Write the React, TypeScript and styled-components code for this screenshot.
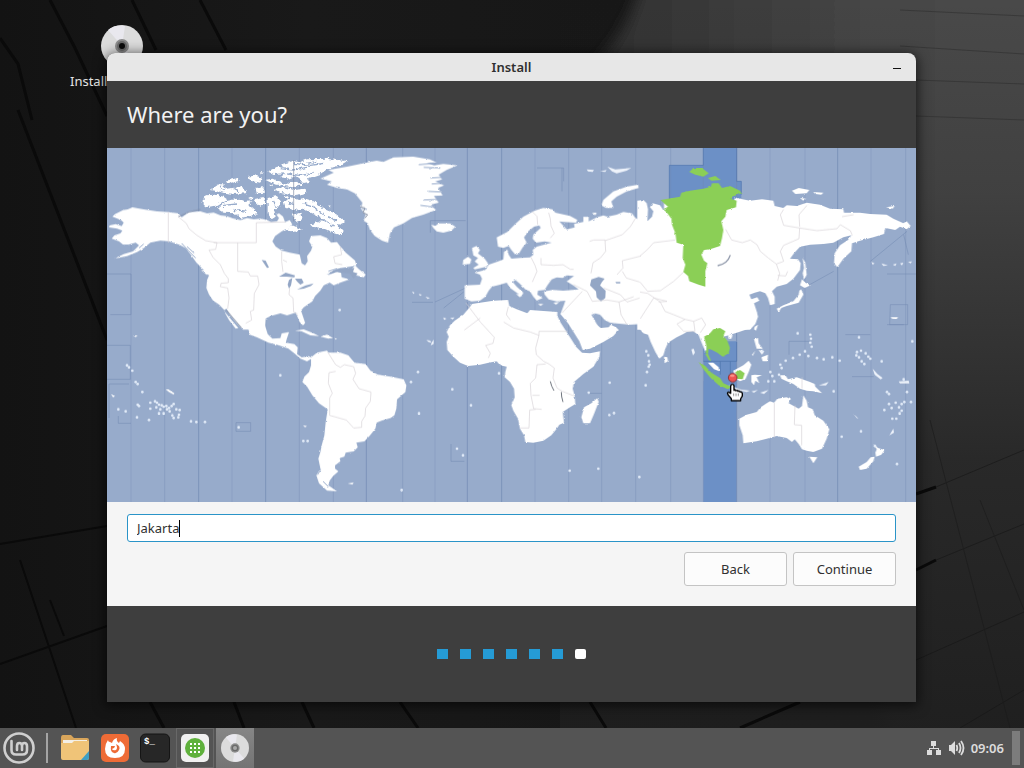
import { useState } from "react"
import styled, { createGlobalStyle } from "styled-components"

const GlobalStyle = createGlobalStyle`
  * {
    box-sizing: border-box;
  }
  body {
    margin: 0;
    font-family: "Noto Sans", "Open Sans", sans-serif;
    font-size: 13px;
    color: #303030;
  }
`

const Desktop = styled.div`
  position: relative;
  display: flex;
  flex-direction: column;
  min-height: 100vh;
  overflow: hidden;
  background-color: #191919;
  > .wallpaper {
    position: absolute;
    inset: 0;
    width: 100%;
    height: 100%;
  }
`

const Workspace = styled.main`
  position: relative;
  flex: 1;
  padding: 53px 108px 26px 107px;
`

const DesktopIcon = styled.div`
  position: absolute;
  top: 25px;
  left: 70px;
  display: flex;
  flex-direction: column;
  align-items: center;
  gap: 5px;
  width: 104px;
  color: #e4e4e4;
  line-height: 18px;
  white-space: nowrap;
  > .name {
    align-self: flex-start;
  }
`

const Window = styled.section`
  position: relative;
  display: flex;
  flex-direction: column;
  border-radius: 8px 8px 0 0;
  background-color: #3e3e3e;
  box-shadow: 0 2px 12px 2px rgba(0, 0, 0, 0.6);
  overflow: hidden;
`

const TitleBar = styled.header`
  display: grid;
  grid-template-columns: 38px 1fr 38px;
  align-items: center;
  height: 28px;
  background-color: #e7e7e7;
  > h1 {
    grid-column: 2;
    margin: 0;
    font-size: 13px;
    font-weight: 600;
    text-align: center;
  }
  > button {
    grid-column: 3;
    display: flex;
    justify-content: center;
    padding: 8px 0;
    border: 0;
    background: none;
  }
`

const Heading = styled.h2`
  margin: 0;
  padding: 15px 20px;
  height: 67px;
  color: #f2f2f2;
  font-size: 22px;
  font-weight: 400;
  line-height: 36px;
`

const Map = styled.svg`
  display: block;
  width: 100%;
  background-color: #97abcb;
`

const Form = styled.form`
  display: flex;
  flex-direction: column;
  gap: 10px;
  padding: 12px 20px 20px;
  background-color: #f5f5f5;
`

const Field = styled.label`
  display: flex;
  align-items: center;
  height: 28px;
  padding: 0 9px;
  border: 1px solid #2a94c8;
  border-radius: 3px;
  background-color: #fff;
  cursor: text;
  > input {
    field-sizing: content;
    padding: 0;
    border: 0;
    outline: 0;
    background: none;
    color: #303030;
    font: inherit;
    caret-color: transparent;
  }
`

const Caret = styled.span`
  width: 1px;
  height: 17px;
  background-color: #000;
`

const Actions = styled.div`
  display: flex;
  justify-content: flex-end;
  gap: 6px;
`

const Button = styled.button`
  width: 103px;
  height: 34px;
  padding: 0;
  border: 1px solid #c4c4c4;
  border-radius: 3px;
  background-color: #fcfcfc;
  color: #303030;
  font: inherit;
`

const Steps = styled.div`
  display: flex;
  align-items: center;
  justify-content: center;
  gap: 12px;
  height: 96px;
`

const Step = styled.span<{ $current?: boolean }>`
  width: 11px;
  height: 10px;
  border-radius: ${(p) => (p.$current ? "2px" : "0")};
  background-color: ${(p) => (p.$current ? "#fff" : "#259bd5")};
`

const Panel = styled.footer`
  position: relative;
  display: flex;
  align-items: center;
  height: 40px;
  background-color: #545454;
  color: #dcdcdc;
`

const MenuButton = styled.button`
  width: 38px;
  height: 40px;
  padding: 0;
  border: 0;
  background: none;
  > svg {
    display: block;
    margin: 0 auto;
  }
`

const Separator = styled.span`
  width: 2px;
  height: 30px;
  margin: 0 7px 0 8px;
  background-color: #a4a4a4;
`

const Launcher = styled.button<{ $open?: boolean; $active?: boolean }>`
  display: flex;
  align-items: center;
  justify-content: center;
  width: ${(p) => (p.$open || p.$active ? "38px" : "40px")};
  height: 40px;
  margin-left: ${(p) => (p.$open ? "1px" : p.$active ? "2px" : "0")};
  padding: 0;
  border: ${(p) => (p.$open ? "1px solid #686868" : "0")};
  background: ${(p) => (p.$active ? "linear-gradient(#868686, #747474)" : "transparent")};
`

const Tray = styled.div`
  display: flex;
  align-items: center;
  gap: 6px;
  margin-left: auto;
  font-weight: 600;
  font-size: 13px;
  > .corner {
    width: 8px;
    height: 34px;
    margin: 0 4px 0 2px;
    background-color: #7c7c7c;
  }
`

/* Map data. One sheet of 270x180 pixels is drawn in thirds of a pixel. */

const zoneLines = [
  72, 173, 275, 375, 476, 577, 679, 778, 887, 984, 1081, 1184, 1284, 1385, 1484, 1586, 1691, 1789, 1889, 1989, 2094,
  2192, 2292, 2396,
]

const strongLines = [275, 476, 778, 1081, 1184, 2192, 1889]

const zoneBoxes =
  "M0 378H72V500H10 M0 592H70V694H0 M6 708V810 M6 708H66 M34 804V826H72 M387 824H431V850H387Z M1032 888V940H1072 M1076 218H970V254 M915 463H978 M984 462L1076 420 M1010 480L1070 432 M1365 60V130 M1290 60H1370 M1370 60V100 M2350 470H2402V530H2348Z M2340 378H2427 M2390 260L2404 320 M2290 340L2400 250 M2090 420L2180 370 M2046 580H2110 M2046 580V620 M2215 560H2290 M2235 686H2300 M2340 530H2390 M1440 736H1484"

const northAmerica = [
  "M8 232L26 228 44 234 50 224 42 216 16 206 24 198 48 186 62 184 76 178 110 184 150 190 184 192 214 196 224 208 246 192 280 190 300 196 320 194 340 202 358 204 380 212 400 216 420 210 440 214 462 212 480 216 492 222 510 220 516 210 508 200 516 196 528 206 534 222 548 216 556 230 540 242 524 250 504 264 496 280 506 296 524 308 548 314 578 320 584 346 594 352 602 340 600 324 612 308 616 296 606 280 612 264 640 262 660 270 672 284 690 282 700 296 706 302 716 314 730 326 744 338 748 352 730 356 700 360 680 366 662 382 690 370 702 374 704 388 728 394 700 404 680 412 668 404 650 412 640 428 624 444 616 460 590 478 582 488 594 524 588 532 578 522 566 494 540 502 520 496 490 504 476 512 474 545 408 545 390 526 370 502 358 482 352 486 336 470 318 458 306 440 298 420 300 396 306 382 290 366 268 344 250 318 236 300 216 290 186 280 160 278 130 284 110 300 90 312 60 324 22 332 50 318 78 310 96 292 86 284 64 290 48 290 36 280 14 272 22 262 40 256 46 248 30 242 6 238Z",
  "M730 368L744 352 756 364 776 380 770 388 748 382Z",
  "M282 366L296 368 310 380 298 380Z",
]

const arctic = [
  "M290 150L296 142 326 140 352 148 360 154 330 172 300 178 290 170Z",
  "M330 182L356 160 390 152 412 162 436 160 424 170 440 184 452 198 430 204 400 210 384 196 350 194Z",
  "M308 126L330 110 352 108 356 122 400 118 420 128 416 136 380 138 350 134 322 128Z",
  "M356 98L392 90 398 98 370 106Z",
  "M424 86L450 82 466 92 456 104 430 98Z",
  "M446 120L470 118 474 134 450 136Z",
  "M440 156L470 150 478 170 460 176Z",
  "M476 96L500 92 524 104 540 110 552 102 574 106 596 104 574 112 560 118 530 114 500 108Z",
  "M500 122L530 118 560 126 596 122 598 136 560 142 520 134Z",
  "M484 70L510 56 532 60 526 48 556 40 580 42 600 34 660 32 720 40 700 52 660 64 640 78 600 92 610 104 590 108 580 96 566 84 548 92 520 88 536 76 500 78Z",
  "M482 150L510 144 520 160 516 178 500 184 506 206 494 214 482 196Z",
  "M530 160L556 148 576 156 596 152 620 160 640 176 670 190 690 200 714 222 704 230 690 228 708 250 700 262 676 254 656 244 620 240 610 230 640 220 640 206 612 196 590 182 560 186 536 180Z",
  "M530 240L556 232 588 246 560 252Z",
  "M554 200L580 194 584 216 566 222Z",
  "M458 74L470 72 466 78Z M486 110L498 112 496 118Z M424 152L436 148 434 156Z M528 148L544 144 540 152Z M664 172L674 174 668 178Z",
]

const europe = [
  "M-149 92L-109 74 -125 66 -69 56 -29 48 0 42 20 38 40 42 70 28 130 26 180 34 200 44 170 44 192 52 220 48 262 52 230 66 206 80 216 94 196 100 222 112 204 120 218 142 192 144 206 164 182 170 198 186 160 200 126 210 100 226 72 238 60 256 54 284 36 278 14 264 0 246 -7 226 -19 218 -13 200 -27 182 -23 164 -45 136 -69 124 -99 120 -129 110 -115 100Z",
  "M184 230L196 234 206 226 240 226 256 236 244 248 220 254 200 250 190 240Z",
  "M284 412L330 410 336 392 330 380 314 374 346 366 356 350 380 342 400 334 402 312 412 304 416 320 424 332 450 330 480 328 490 320 488 306 500 296 522 290 545 284 524 280 498 284 488 272 490 260 512 240 508 232 492 236 474 250 462 268 470 284 458 298 446 318 436 320 424 306 416 294 400 300 384 296 380 268 412 252 436 228 460 206 494 188 520 180 548 184 556 194 600 204 622 216 618 224 580 222 568 220 590 244 614 238 612 228 640 222 640 208 656 206 656 220 680 208 700 202 712 206 740 200 760 192 786 196 796 210 818 220 818 528 780 530 740 526 720 524 704 516 690 500 676 496 664 500 690 545 608 545 592 520 572 498 576 486 582 470 586 458 560 460 536 454 524 440 522 430 548 426 580 428 626 424 610 412 590 400 612 384 590 382 578 390 560 388 545 394 532 412 524 426 504 428 502 440 518 450 500 458 490 446 480 430 466 424 450 408 436 396 428 402 440 416 460 434 454 446 440 434 420 420 410 404 390 410 366 416 356 428 346 446 330 458 304 460 284 452Z",
  "M306 300L320 294 330 306 324 316 344 332 354 346 350 356 314 364 310 360 326 350 314 340 324 330 310 322Z",
  "M280 336L294 326 304 334 300 348 278 350Z",
  "M694 172L700 156 730 130 770 116 804 110 806 120 770 130 740 146 724 160 730 180 708 180Z",
  "M438 438L454 440 450 448Z M504 468L520 468 512 474Z M550 464L568 462 558 470Z M640 206L652 208 650 222 642 220Z M666 194L680 194 676 202Z",
]

const asia = [
  "M-8 158L10 156 20 166 24 184 22 220 36 206 40 190 30 178 38 166 60 172 72 190 72 160 100 150 280 168 284 148 300 152 330 158 366 154 400 158 404 174 430 180 440 172 470 174 500 164 540 170 570 182 610 184 612 194 660 194 690 198 740 200 760 212 790 226 800 220 812 234 800 244 780 236 766 246 736 240 732 258 700 268 660 278 636 286 634 310 610 332 592 358 582 346 584 316 600 292 624 276 634 262 610 268 580 284 550 288 510 290 480 296 462 316 450 332 474 334 482 346 480 366 460 392 440 408 410 416 396 430 404 446 404 468 390 472 384 450 376 436 360 430 344 434 328 440 334 454 352 448 358 458 342 466 350 490 354 506 346 528 330 545 -8 545Z",
  "M486 394L496 404 512 412 494 420 480 412Z",
  "M484 424L490 440 476 464 440 474 424 480 416 492 410 482 430 472 460 460 476 440 478 428Z",
  "M488 330L496 344 500 380 492 396 488 376 492 360Z",
  "M456 128L476 120 508 126 500 136 466 138Z M520 132L550 134 544 140 526 138Z M480 150L498 152 490 158Z M738 178L764 174 758 182Z",
  "M752 508L774 508 770 513 756 512Z",
]

const southAmerica = [
  "M350 -34L370 -10 394 18 386 20 366 -6Z",
  "M400 -40H474L474 10 482 36 496 50 520 48 524 34 546 30 540 48 536 62 562 66 572 76 570 96 584 106 604 102 616 108 600 118 580 110 562 94 544 80 516 70 484 62 450 46 428 38 424 20 400 -6Z",
  "M612 106L630 92 660 86 664 92 700 92 724 100 742 122 776 126 790 146 812 158 850 164 890 172 898 190 895 210 870 232 868 260 862 280 850 288 824 296 809 302 805 320 789 340 772 358 748 362 752 376 740 388 716 392 712 404 698 408 700 418 684 430 684 440 694 448 678 462 668 476 664 490 690 508 660 506 636 484 628 460 640 440 634 410 640 390 644 370 652 340 656 300 662 262 636 244 616 220 600 194 586 180 592 164 606 150 612 130Z",
  "M564 26L590 22 620 34 636 42 610 40 584 28Z M640 44L660 38 678 48 664 50Z M584 0L594 2 590 8Z M682 48L690 50 686 53Z",
  "M722 484L740 482 736 488Z M588 310L600 312 594 316Z",
  "M176 202L184 202 202 214 200 218 186 210Z M78 40L92 41 86 45Z M12 216L24 222 18 226Z",
]

const africa = [
  "M306 -54L330 -58 370 -64 414 -66 418 -48 440 -38 472 -26 480 -36 510 -34 562 -30 562 -18 572 2 586 24 600 46 618 74 636 92 660 94 690 88 688 104 670 134 640 156 612 180 608 200 614 222 616 246 600 256 578 270 582 302 568 308 560 320 544 340 520 356 490 362 466 360 462 340 450 320 444 290 430 266 424 250 434 226 432 200 420 180 404 166 406 150 410 134 390 130 380 118 356 122 330 128 294 132 270 122 250 104 232 84 230 60 236 44 230 30 240 10 254 -4 280 -22 300 -46Z",
  "M572 -24L585 -40 650 -40 662 -20 674 4 692 18 716 16 722 8 738 16 746 24 730 42 700 60 660 80 638 84 628 58 612 32 596 6Z",
  "M682 228L686 240 672 276 660 304 640 304 634 286 642 256 664 244Z",
]

const oceania = [
  "M-8 -30H350L346 4 326 20 290 32 266 40 250 44 200 50 200 80 196 90 184 60 176 40 160 28 140 30 130 36 110 46 84 62 76 80 70 100 58 110 46 90 32 60 24 38 10 34 -8 12Z",
  "M204 122L220 122 236 136 238 148 222 142Z M72 104L82 106 84 118 74 124Z",
  "M280 146L310 130 326 116 334 128 326 150 316 172 300 178 284 168Z",
  "M334 160L344 158 366 160 350 166 358 184 346 176 342 190 334 180Z",
  "M342 52L354 48 356 64 368 80 350 80Z M364 106L384 98 382 118 368 118Z M344 14L354 8 348 26 342 22Z M264 40L278 38 274 50 266 50Z M336 98L346 86 338 102Z M356 84L372 88 366 98Z",
  "M420 160L436 160 444 172 470 166 510 180 524 186 526 194 546 214 520 208 500 206 480 200 460 186 440 178 424 170Z",
  "M298 290L320 278 350 270 362 256 380 244 390 238 402 242 412 230 440 226 452 232 446 244 476 260 486 252 490 220 500 236 504 256 518 262 524 280 550 296 568 322 560 350 546 380 520 390 500 386 486 382 476 366 464 352 456 360 440 348 410 342 380 350 350 358 310 364 308 340 298 310Z",
  "M508 404L532 406 520 424Z",
  "M700 366L714 378 734 384 724 398 708 404 706 392 710 382Z M704 404L700 418 680 440 660 444 656 434 680 420 692 406Z",
]

/* groups too small for the rough coast, drawn paler */
const smallIslands =
  "M1439 64L1461 66 1457 72 1443 70Z M1479 70L1499 66 1495 72Z M1501 56L1525 64 1549 62 1573 60 1559 68 1529 76 1515 70Z M915 430L923 434 919 438Z M935 438L945 440 939 444Z M955 446L969 450 962 453Z M1009 508L1019 512 1011 516Z M1029 510L1043 508 1037 514Z M2293 342L2303 346 2297 350Z M2323 346L2343 352 2329 354Z M2357 350L2369 346 2365 354Z M2379 346L2389 344 2385 352Z M2403 342L2415 340 2411 346Z M958 576L970 578 973 584 964 582Z M974 584L980 574 980 588 971 592Z M1863 710L1899 724 1929 728 1919 732 1889 726Z M1933 730L1953 726 1941 734Z M1959 734L1985 726 1971 738Z M2135 712L2165 702 2157 712Z M2297 662L2311 678 2327 690 2321 694 2303 680Z M2239 798L2255 812 2249 810Z M2375 700L2405 698 2407 706 2379 706Z M2347 862L2359 842 2361 854Z M1753 604L1760 602 1764 614 1758 622Z"

const greenNorth = [
  "M62 156L84 152 120 146 124 134 150 128 190 122 212 116 216 106 236 106 246 120 270 114 300 128 304 136 276 146 272 152 290 158 288 178 260 186 256 206 244 220 250 246 246 270 240 294 210 304 192 306 184 320 192 338 202 346 196 370 196 416 176 410 148 400 144 384 130 372 136 350 128 330 130 290 110 284 106 256 96 230 94 212 82 196 70 184 84 176 72 166Z",
  "M148 72L160 60 186 60 206 76 190 86 166 80Z M204 90L226 84 242 96 214 98Z",
]

const greenSouth = [
  "M192 44L210 34 220 22 240 18 256 28 250 42 262 56 270 78 266 94 248 104 232 92 216 84 206 80 204 96 214 118 206 114 196 96 200 76 196 60Z",
  "M176 120L196 132 214 152 240 168 250 184 274 194 264 202 236 190 212 168 190 142Z",
  "M286 150L300 144 314 154 308 172 290 170Z",
]

/* x, y pairs of small islands on the whole map */
const islets = [
  [60, 652], [66, 658], [76, 668], [86, 702], [92, 708], [106, 732], [92, 770], [96, 774], [34, 784], [56, 790],
  [90, 808], [126, 816], [130, 764], [144, 760], [150, 764], [156, 770], [164, 772], [170, 776], [178, 774], [186, 780],
  [194, 774], [200, 768], [208, 784], [218, 786], [160, 784], [156, 796], [170, 796], [196, 802], [200, 810], [216, 800],
  [214, 808], [180, 784], [148, 778], [130, 782], [188, 790], [252, 820], [268, 822], [294, 822], [520, 682], [698, 486],
  [395, 838], [589, 879], [602, 879], [912, 702], [933, 672], [936, 796], [1036, 724], [1092, 772], [1050, 902],
  [1068, 922], [1176, 676], [1388, 968], [1474, 962], [1508, 704], [1507, 801], [1521, 795], [1445, 734], [884, 1026],
  [1597, 987], [1618, 610], [1624, 622], [1626, 640], [1625, 656], [1620, 672], [1616, 712], [1628, 650], [2072, 556],
  [2110, 560], [2112, 572], [2110, 584], [2114, 596], [2020, 650], [2036, 638], [2058, 630], [2078, 620], [2104, 624],
  [2130, 630], [2150, 634], [2176, 628], [2198, 638], [2024, 660], [1990, 672], [1996, 684], [2002, 700], [2250, 612],
  [2262, 608], [2276, 616], [2284, 626], [2248, 622], [2256, 628], [2264, 640], [2272, 648], [2290, 632], [2324, 640],
  [2256, 568], [2416, 580], [2340, 732], [2346, 738], [2332, 786], [2346, 768], [2354, 780], [2366, 764], [2376, 778],
  [2384, 768], [2392, 762], [2384, 788], [2378, 796], [2368, 812], [2400, 732], [2412, 762], [2356, 812], [2204, 866],
  [2262, 850], [2370, 948], [2304, 894], [1984, 700], [2016, 680], [2094, 610], [1966, 610], [2180, 730], [2390, 694],
]

type SheetProps = { x: number; y: number; shapes: string[]; fill?: string }

function Sheet({ x, y, shapes, fill = "#fff" }: SheetProps) {
  return (
    <g transform={`translate(${x} ${y})`} fill={fill}>
      {shapes.map((d) => (
        <path key={d} d={d} />
      ))}
    </g>
  )
}

type CoastProps = { id: string; scale: number }

function CoastFilter({ id, scale }: CoastProps) {
  return (
    <filter id={id} x="0" y="0" width="2427" height="1062" filterUnits="userSpaceOnUse">
      <feTurbulence type="fractalNoise" baseFrequency="0.09" numOctaves="3" seed="4" />
      <feDisplacementMap in="SourceGraphic" scale={scale} xChannelSelector="R" yChannelSelector="G" />
    </filter>
  )
}

function TimezoneMap() {
  return (
    <Map viewBox="0 0 2427 1062" role="img" aria-label="Time zone map">
      <defs>
        <CoastFilter id="fjords" scale={14} />
        <CoastFilter id="coast" scale={6} />
      </defs>
      <path d="M1789 0H1889V100H1903V150H1889V1062H1789V560H1770V440H1660V156H1687V52H1789Z" fill="#6c90c6" />
      <path d="M1660 156V400H1770V700H1789V580H1889V300Z" fill="#97abcb" />
      <path d="M1789 582H1889V640H1789Z" fill="#6c90c6" />
      <g stroke="#7289b2" strokeWidth="3" fill="none">
        {zoneLines.map((x) => (
          <path key={x} d={`M${x} 0V1062`} opacity={strongLines.includes(x) ? 0.7 : 0.35} />
        ))}
        <path d={zoneBoxes} opacity="0.5" />
        <path
          d="M1789 640H1889V582 M1840 640V680 M1870 640V680 M1687 156V52H1789V0 M1889 0V100H1903V140"
          stroke="#4f74ae"
          strokeWidth="2"
        />
      </g>
      <g filter="url(#fjords)">
        <Sheet x={0} y={0} shapes={arctic} />
        <path
          d="M520 62L560 66 600 58 M560 46L610 52 650 46 M540 78L580 82 620 76 M630 40L600 46 M340 114L350 128 M380 122L396 130 M350 172L390 168 M380 184L420 190 M590 166L620 176 650 200 M600 210L650 216 680 234 M540 160L560 170 M660 206L690 218 M500 156L506 176"
          fill="none"
          stroke="#97abcb"
          strokeWidth="4"
        />
      </g>
      <g filter="url(#coast)">
        <Sheet x={0} y={0} shapes={northAmerica} />
        <Sheet x={789} y={0} shapes={europe} />
        <Sheet x={1599} y={0} shapes={asia} />
        <Sheet x={0} y={522} shapes={southAmerica} />
        <Sheet x={789} y={522} shapes={africa} />
        <Sheet x={1599} y={522} shapes={oceania} />
        <Sheet x={1599} y={0} shapes={greenNorth} fill="#8bcf57" />
        <Sheet x={1599} y={522} shapes={greenSouth} fill="#8bcf57" />
        <path
          d="M224 286L244 308 266 330 M240 296L262 316 M664 370L690 362 M96 300L110 288 M630 940L640 966 632 980 M648 1000L664 1016 M985 46L935 50 M1000 60L950 58 M1004 88L970 90 M1002 106L974 108 M1000 132L964 130 M996 154L950 156 M984 178L940 172 M764 182L780 184"
          fill="none"
          stroke="#97abcb"
          strokeWidth="3"
        />
      </g>
      <path d={smallIslands} fill="#eef3fb" />
      <g fill="#e3ecf9">
        {islets.map(([x, y]) => (
          <ellipse key={`${x}-${y}`} cx={x} cy={y} rx="4" ry="4" />
        ))}
      </g>
      <g fill="#93a6c5">
        <path d="M464 336L476 338 486 358 480 360Z" />
        <path d="M516 386L536 374 564 382 562 388 540 386Z" />
        <path d="M546 396L556 390 552 412 546 422 542 410Z" />
        <path d="M564 392L584 392 590 404 580 410 570 400Z" />
        <path d="M570 424L596 412 620 406 612 414 590 422Z" />
        <path d="M1453 394L1475 387 1493 392 1485 402 1479 412 1496 428 1495 450 1482 460 1469 448 1467 430 1449 412Z" />
        <path d="M658 380L690 364 742 360 738 372 752 376 740 392 728 376 704 374 690 372Z" />
        <path d="M1525 402H1540V406H1528Z" />
      </g>
      <g fill="none" stroke="#8f98aa" strokeWidth="4">
        <path d="M1832 353Q1862 347 1870 321" />
        <path d="M1330 700L1334 714 1341 728 M1363 732L1364 746 1368 762" strokeWidth="3" stroke="#6f757e" />
        <path d="M760 176L774 180 768 194 782 200 774 210 M358 486L404 540" strokeWidth="3" />
      </g>
      <g fill="none" stroke="#d6d1d6" strokeWidth="2" strokeLinejoin="round">
        <path d="M184 192V284 M214 206L238 226 246 242 270 262 296 278 330 284 326 304 306 306 318 328 340 350 352 376 364 392 M320 284H448V224L536 222 M392 284V370L424 372 430 384 452 384 456 410 442 436 440 486 430 490 434 516 416 526 M364 392V404L342 406 340 416 362 420 366 450 362 482 M524 310V340L528 372 M528 336L540 342 M548 420L546 440 558 450 560 492 572 498 M700 296L704 320 680 326 684 346 706 350" />
        <path d="M214 206L246 192 280 184 M560 36V220" stroke="#7f8ba4" />
        <path d="M662 612L686 650 700 658 712 650 740 656 746 676 738 694 756 722 792 732 790 760 776 780 774 804 764 820 764 838 740 840 718 816 682 806 668 802 668 750 676 736 664 706 666 674 686 670" />
        <path d="M1077 465L1120 522 1162 568 1158 586 1136 592 1150 616 1144 630 M1072 546L1120 510 M1190 522L1220 540 1270 552 1296 562V550H1382 M1204 476L1198 500 1210 516 M1296 562L1286 600 1288 620 1310 640 1326 648 1342 660 1338 690 1350 720 1366 730 1402 744 M1290 650L1286 690 1270 706 1272 742 1280 782 1304 784 M1286 784L1268 786 1266 840H1240 M1276 742H1298 M1290 650L1316 648" />
        <path d="M1275 190L1290 205 1292 230 M1325 194L1330 212 1332 234 1342 256 1330 270 M1302 330V350L1340 352 1368 350 1390 364 1400 364 M1272 328L1284 352 1290 370 1276 402 M1448 280L1460 276H1494L1496 310 1480 330 1458 344 1452 376 M1494 278L1546 260 1570 236 1586 210 M1602 324L1546 338 1548 360 1530 380 M1546 370L1558 390 1598 402 M1400 410L1440 430 1456 460 1500 456 1536 462 1542 500 1560 530 M1426 430L1366 494 M1490 420L1540 440 1560 462 1598 450 M1536 462L1580 446" />
        <path d="M1599 324L1622 304 1640 284 1705 276 M1599 402L1622 430 1660 428 1700 400 1730 372 M1599 432L1622 436 1660 462 1674 490 1700 500 1734 514 M1655 462L1680 460 1640 450 1614 490 1600 512 M1734 514L1760 520 1764 550 1730 550 1710 528Z M1760 520L1784 510 1796 530 1780 554 M1856 244L1874 276 1906 284 1930 276 1950 290 1960 310 1984 330 2008 348 2018 376 2012 398 M2008 348L2030 340 2020 310 2030 292 2076 272 2078 240 2030 232 2020 200 2030 184 M2078 240L2130 248 2190 242 2200 230 2230 248 2236 262 M2078 236L2076 200 2100 172 M2205 206L2240 200 M2012 382L2036 384 2042 370" />
        <path d="M2002 764V868 M2064 772L2062 830 2084 832V892 M2085 688V722" />
      </g>
      <circle cx="1877" cy="689" r="13" fill="#ef5353" stroke="#8f3434" strokeWidth="3" />
      <ellipse cx="1876" cy="683" rx="7" ry="4" fill="#f9958a" />
      <g transform="translate(1859 708)">
        <path
          d="M14 2Q20 -1 22 5V19Q25 16 28 20 32 17 34 22 38 19 40 24 45 22 47 28V36L42 44V50H14V44L4 32Q0 25 6 24L12 28V6Z"
          fill="#fff"
          stroke="#000"
          strokeWidth="4"
          strokeLinejoin="round"
        />
        <path d="M21 28V36M28 28V36M35 28V36" stroke="#555" strokeWidth="2" />
      </g>
    </Map>
  )
}

function Wallpaper() {
  return (
    <svg className="wallpaper" viewBox="0 0 1024 768" preserveAspectRatio="none" aria-hidden="true">
      <defs>
        <linearGradient id="base" x1="0" y1="0" x2="1" y2="0">
          <stop offset="0" stopColor="#131313" />
          <stop offset="0.3" stopColor="#191919" />
          <stop offset="0.6" stopColor="#171717" />
          <stop offset="1" stopColor="#242424" />
        </linearGradient>
        <linearGradient id="shine" x1="0" y1="0" x2="1" y2="0">
          <stop offset="0" stopColor="#303030" />
          <stop offset="0.6" stopColor="#464646" />
          <stop offset="1" stopColor="#4a4a4a" />
        </linearGradient>
        <linearGradient id="shade" x1="0" y1="0" x2="0" y2="1">
          <stop offset="0" stopColor="#1e1e1e" stopOpacity="0" />
          <stop offset="0.25" stopColor="#1e1e1e" stopOpacity="0.2" />
          <stop offset="0.6" stopColor="#1e1e1e" stopOpacity="0.75" />
          <stop offset="1" stopColor="#1e1e1e" stopOpacity="1" />
        </linearGradient>
        <filter id="soft" x="-10%" y="-10%" width="120%" height="120%">
          <feGaussianBlur stdDeviation="7" />
        </filter>
      </defs>
      <path d="M0 0H1024V768H0Z" fill="url(#base)" />
      <path d="M642 -20Q630 30 590 70L800 400 900 780H1050V-20Z" fill="url(#shine)" filter="url(#soft)" />
      <path d="M560 0H1024V768H560Z" fill="url(#shade)" />
      <g stroke="#0a0a0a" strokeWidth="3" fill="none">
        <path d="M50 0L75 48 107 116 M18 110L107 340 M0 38L18 64 32 120 M200 0L226 50 M132 0L156 50" />
        <path d="M0 544L107 526 M0 664L107 626 M64 636L50 600 M20 560L76 728" strokeWidth="2" />
        <path d="M150 702L164 728 M234 702L244 728 M302 702L314 728 M400 702L418 728 M590 702L606 728" />
        <path d="M916 570L936 560 M916 494L936 487 M740 728L800 702" />
      </g>
      <g stroke="#2f2f2f" strokeWidth="1" fill="none" opacity="0.6">
        <path d="M900 10L1024 16 M900 46L1024 54 M916 80L1024 84 M916 116L1024 120" />
        <path d="M936 487L1024 450 M936 560L1024 524 M916 660L1024 612 M960 728L1024 690" stroke="#161616" />
        <path d="M930 420L1010 728 M980 500L1024 610" stroke="#1a1a1a" />
      </g>
    </svg>
  )
}

type DiscProps = { size: number; core?: string }

function Disc({ size, core = "#0b0b0b" }: DiscProps) {
  return (
    <svg width={size} height={size} viewBox="0 0 42 42" aria-hidden="true">
      <circle cx="21" cy="21" r="21" fill="#dcdcdc" />
      <path d="M21 21L7 5A21 21 0 0 1 24 1Z M21 21L35 37A21 21 0 0 1 18 41Z" fill="#e9e8ee" />
      <circle cx="21" cy="21" r="7" fill="#8c8c8c" />
      <circle cx="21" cy="21" r="5" fill="#6a6a6a" />
      <circle cx="21" cy="21" r="3" fill={core} />
    </svg>
  )
}

function MintLogo() {
  return (
    <svg width="32" height="32" viewBox="0 0 32 32" fill="none" stroke="#cfcfcf" aria-hidden="true">
      <circle cx="16" cy="16" r="14.5" strokeWidth="2.6" />
      <path
        d="M8.5 9V18Q8.5 22.5 13 22.5H19.5Q24 22.5 24 18V14Q24 11 21.4 11Q19 11 19 14V18M19 14Q19 11 16.4 11Q14 11 14 14V18"
        strokeWidth="2.6"
        strokeLinecap="round"
      />
    </svg>
  )
}

function Folder() {
  return (
    <svg width="30" height="28" viewBox="0 0 30 28" aria-hidden="true">
      <path d="M1 4Q1 1 3 1H11L14 4H27Q29 4 29 6V24H1Z" fill="#d8a55b" />
      <path d="M3 6H27V12H3Z" fill="#f4efe5" />
      <path d="M1 9H12L14 7H29V24Q29 26 27 26H3Q1 26 1 24Z" fill="#f0c478" />
      <path d="M21 26L29 17V24Q29 26 27 26Z" fill="#3e9fc4" />
    </svg>
  )
}

function Fox() {
  return (
    <svg width="30" height="30" viewBox="0 0 30 30" aria-hidden="true">
      <rect x="1" y="1" width="28" height="28" rx="5" fill="#ee6b36" />
      <path
        d="M8 7Q8 9 10 9L12 10Q13 6 17 5Q16 8 19 10L20 8Q25 11 25 16Q25 25 15 25Q5 25 5 16Q5 11 8 7Z"
        fill="#fff"
      />
      <path d="M11 13L15 13Q15 15 12 16Q13 18 16 17Q18 15 16 11Q21 13 19 17Q17 21 14 20Q10 19 11 13Z" fill="#ee6b36" />
    </svg>
  )
}

function Terminal() {
  return (
    <svg width="30" height="30" viewBox="0 0 30 30" aria-hidden="true">
      <rect x="0.5" y="1" width="29" height="28" rx="5" fill="#272727" stroke="#151515" />
      <text x="4" y="11" fill="#fff" fontFamily="Liberation Mono, monospace" fontWeight="700" fontSize="9">
        $_
      </text>
    </svg>
  )
}

function Apps() {
  const dots = [11, 15, 19]
  return (
    <svg width="30" height="30" viewBox="0 0 30 30" aria-hidden="true">
      <rect x="1" y="1" width="28" height="28" rx="5" fill="#f1f1f1" />
      <circle cx="15" cy="15" r="10" fill="#5fb13c" />
      {dots.map((y) => dots.map((x) => <rect key={`${x}${y}`} x={x - 1} y={y - 1} width="2" height="2" fill="#fff" />))}
    </svg>
  )
}

function Network() {
  return (
    <svg width="16" height="16" viewBox="0 0 16 16" fill="#dcdcdc" aria-hidden="true">
      <path d="M5 1H10V6H8V8H13V10H15V15H10V10H12V9H4V10H6V15H1V10H3V8H7V6H5Z" />
    </svg>
  )
}

function Volume() {
  return (
    <svg width="17" height="16" viewBox="0 0 17 16" fill="none" stroke="#dcdcdc" strokeWidth="1.8" aria-hidden="true">
      <path d="M1 5H3L7 1V15L3 11H1Z" fill="#dcdcdc" stroke="none" />
      <path d="M8.5 5Q10 8 8.5 11M11 3Q14 8 11 13M13 1Q18 8 13 15" />
    </svg>
  )
}

export default function App() {
  const [city, setCity] = useState("Jakarta")
  const steps = [1, 2, 3, 4, 5, 6, 7]

  return (
    <Desktop>
      <GlobalStyle />
      <Wallpaper />
      <Workspace>
        <DesktopIcon>
          <Disc size={42} />
          <span className="name">Install</span>
        </DesktopIcon>
        <Window>
          <TitleBar>
            <h1>Install</h1>
            <button type="button" aria-label="Minimize">
              <svg width="8" height="8" viewBox="0 0 8 8">
                <path d="M0 5H8V6H0Z" fill="#101010" />
              </svg>
            </button>
          </TitleBar>
          <Heading>Where are you?</Heading>
          <TimezoneMap />
          <Form onSubmit={(e) => e.preventDefault()}>
            <Field>
              <input aria-label="Location" value={city} onChange={(e) => setCity(e.target.value)} />
              <Caret />
            </Field>
            <Actions>
              <Button type="button">Back</Button>
              <Button type="submit">Continue</Button>
            </Actions>
          </Form>
          <Steps>
            {steps.map((n) => (
              <Step key={n} $current={n === steps.length} />
            ))}
          </Steps>
        </Window>
      </Workspace>
      <Panel>
        <MenuButton aria-label="Menu">
          <MintLogo />
        </MenuButton>
        <Separator />
        <Launcher aria-label="Files">
          <Folder />
        </Launcher>
        <Launcher aria-label="Browser">
          <Fox />
        </Launcher>
        <Launcher aria-label="Terminal">
          <Terminal />
        </Launcher>
        <Launcher aria-label="Applications" $open>
          <Apps />
        </Launcher>
        <Launcher aria-label="Installer" $active>
          <Disc size={28} core="#a8a8a8" />
        </Launcher>
        <Tray>
          <Network />
          <Volume />
          <time>09:06</time>
          <span className="corner" />
        </Tray>
      </Panel>
    </Desktop>
  )
}
